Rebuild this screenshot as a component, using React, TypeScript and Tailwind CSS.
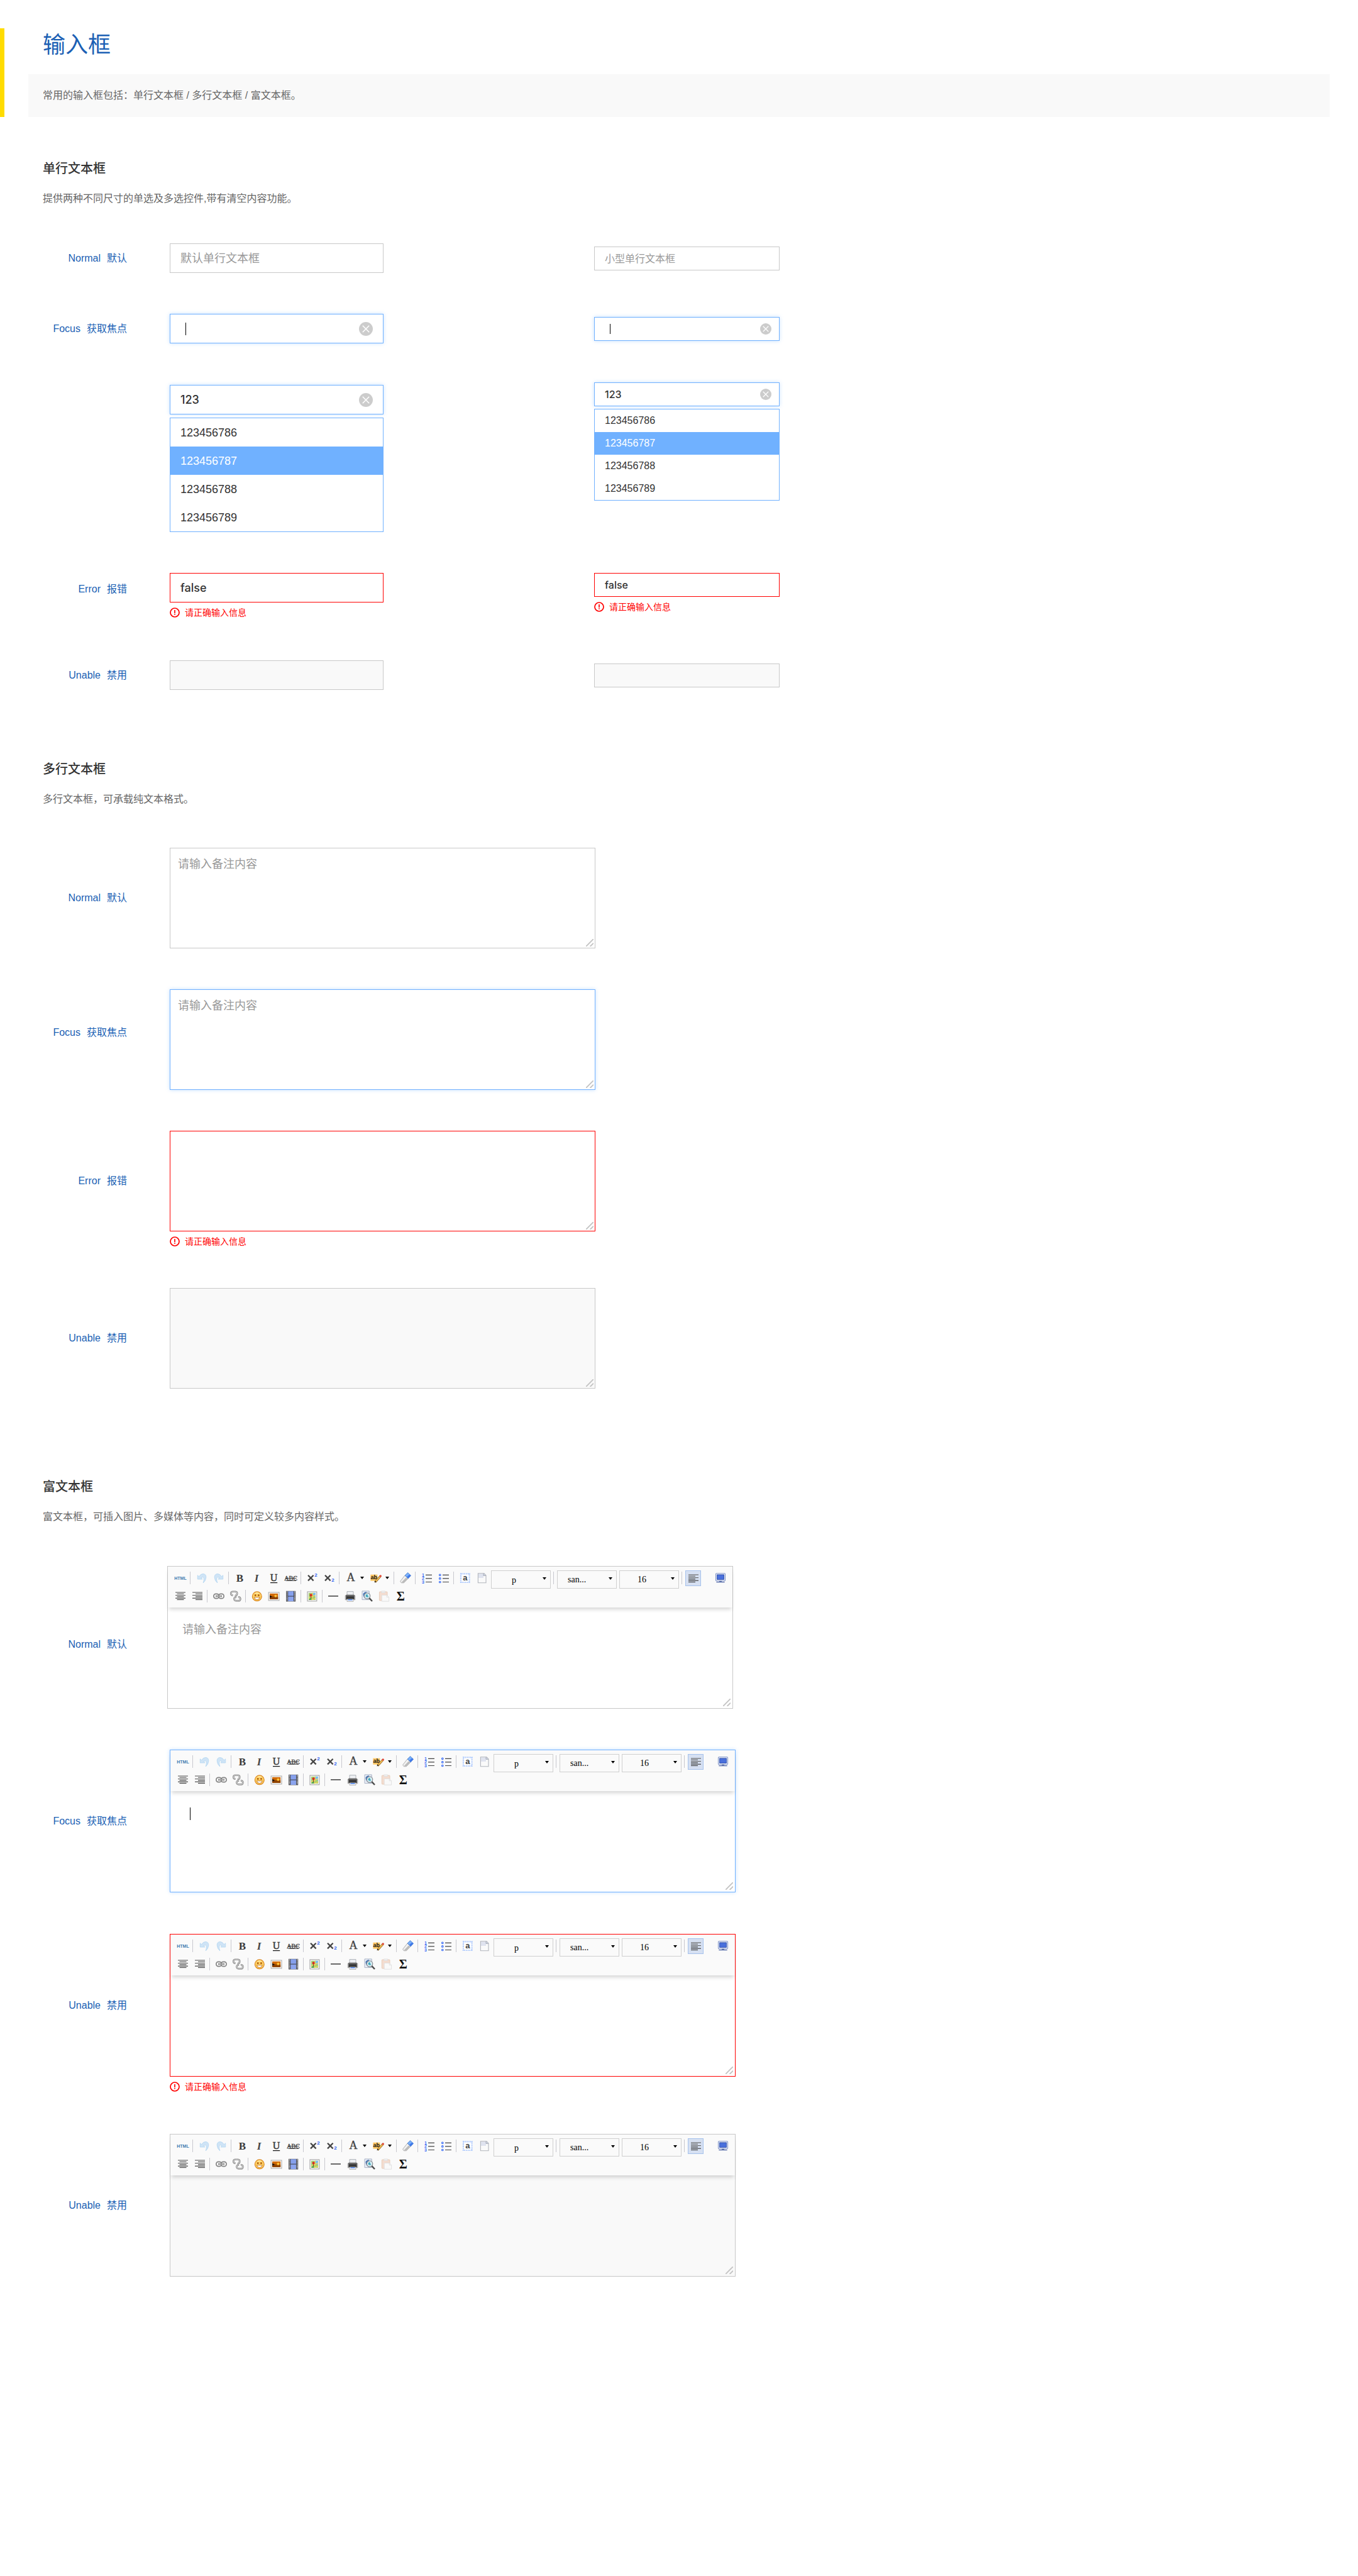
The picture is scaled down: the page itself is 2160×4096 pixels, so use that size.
import React, { useId } from "react";

type State = "normal" | "focus" | "error" | "disabled";

const frame: Record<State, string> = {
  normal: "border-[#c8c8c8] bg-white",
  focus: "border-[#70b1ff] bg-white shadow-[0_0_6px_rgba(112,177,255,0.4)]",
  error: "border-[#ff0000] bg-white",
  disabled: "border-[#c8c8c8] bg-[#f9f9f9]",
};

/* ---------- shared pieces ---------- */

function Row({
  label,
  htmlFor,
  labelClass,
  gapClass = "gap-[68px]",
  className,
  children,
}: {
  label?: [string, string];
  htmlFor?: string;
  labelClass: string;
  gapClass?: string;
  className: string;
  children: React.ReactNode;
}) {
  return (
    <div className={`flex items-start ${gapClass} ${className}`}>
      <div className={`flex w-[134px] shrink-0 items-center justify-end ${labelClass}`}>
        {label && (
          <label htmlFor={htmlFor} className="flex gap-2.5 text-base leading-6 text-[#1b5fb4]">
            <span>{label[0]}</span>
            <span>{label[1]}</span>
          </label>
        )}
      </div>
      {children}
    </div>
  );
}

function SectionHead({ title, text, className }: { title: string; text: string; className: string }) {
  return (
    <div className={className}>
      <h2 className="text-xl leading-7 font-medium text-[#333]">{title}</h2>
      <p className="mt-[22px] text-base leading-6 text-[#666]">{text}</p>
    </div>
  );
}

function ErrorNote() {
  return (
    <p className="mt-2 flex h-4 items-center gap-2 text-sm text-[#ff0000]">
      <svg className="size-4" viewBox="0 0 16 16" fill="none" aria-hidden="true">
        <circle cx="8" cy="8" r="7" stroke="currentColor" strokeWidth="1.7" />
        <path d="M8 4.6V8.4" stroke="currentColor" strokeWidth="1.7" strokeLinecap="round" />
        <circle cx="8" cy="11" r="0.9" fill="currentColor" />
      </svg>
      请正确输入信息
    </p>
  );
}

function ResizeGrip() {
  return (
    <svg className="pointer-events-none absolute right-[3px] bottom-[3px] size-3" viewBox="0 0 12 12" aria-hidden="true">
      <path d="M0 12L12 0M6.6 12L12 6.6" stroke="#c4c4c4" strokeWidth="1.9" />
    </svg>
  );
}

function ClearIcon({ className }: { className: string }) {
  return (
    <svg className={className} viewBox="0 0 22 22" aria-hidden="true">
      <circle cx="11" cy="11" r="11" fill="#ccc" />
      <path d="M5.8 5.8L16.2 16.2M16.2 5.8L5.8 16.2" stroke="#fff" strokeWidth="1.5" />
    </svg>
  );
}

/* ---------- single line ---------- */

function TextBox({
  id,
  name,
  small,
  state,
  value,
  placeholder,
  clearable,
  caret,
}: {
  id?: string;
  name: string;
  small?: boolean;
  state: State;
  value?: string;
  placeholder?: string;
  clearable?: boolean;
  caret?: boolean;
}) {
  return (
    <div className="relative">
      <input
        id={id}
        aria-label={id ? undefined : name}
        type="text"
        defaultValue={value}
        placeholder={placeholder}
        disabled={state === "disabled"}
        aria-invalid={state === "error"}
        className={`block w-full border px-4 font-[Inter,'Noto_Sans_CJK_SC',sans-serif] font-medium text-[#333] outline-none placeholder:font-normal placeholder:text-[#999] placeholder:opacity-100 ${
          small ? "h-[38px] text-base" : "h-[47px] text-lg"
        } ${frame[state]}`}
      />
      {caret && (
        <span
          className={`pointer-events-none absolute w-px bg-black ${
            small ? "top-[11px] left-[25px] h-4" : "top-[14px] left-[25px] h-5"
          }`}
        />
      )}
      {clearable && (
        <button
          type="button"
          aria-label="清空"
          className={`absolute inset-y-0 flex items-center ${small ? "right-[13px]" : "right-[17px]"}`}
        >
          <ClearIcon className={small ? "size-[18px]" : "size-[22px]"} />
        </button>
      )}
    </div>
  );
}

function Options({ small }: { small?: boolean }) {
  const items = ["123456786", "123456787", "123456788", "123456789"];
  return (
    <ul
      role="listbox"
      aria-label="候选内容"
      className={`border border-[#70b1ff] bg-white ${small ? "mt-1 text-base" : "mt-[5px] text-lg"}`}
    >
      {items.map((t, i) => (
        <li
          key={t}
          role="option"
          aria-selected={i === 1}
          className={`flex items-center px-4 ${small ? "h-9" : "h-[45px]"} ${
            i === 1 ? "bg-[#70b1ff] text-white" : "text-[#333]"
          }`}
        >
          {t}
        </li>
      ))}
    </ul>
  );
}

function Pair({ align, large, small }: { align: string; large: React.ReactNode; small: React.ReactNode }) {
  return (
    <div className={`flex gap-[335px] ${align}`}>
      <div className="w-[340px]">{large}</div>
      <div className="w-[295px]">{small}</div>
    </div>
  );
}

/* ---------- multi line ---------- */

function TextArea({ id, state, placeholder }: { id: string; state: State; placeholder?: string }) {
  return (
    <div className="w-[677px]">
      <div className="relative">
        <textarea
          id={id}
          placeholder={placeholder}
          disabled={state === "disabled"}
          aria-invalid={state === "error"}
          className={`block h-40 w-full resize-none border px-3 py-3 text-lg leading-[26px] text-[#333] outline-none placeholder:text-[#999] placeholder:opacity-100 ${frame[state]}`}
        />
        <ResizeGrip />
      </div>
      {state === "error" && <ErrorNote />}
    </div>
  );
}

/* ---------- rich text toolbar ---------- */

function Glyph({ children }: { children: React.ReactNode }) {
  return (
    <svg className="size-[18px] overflow-visible" viewBox="0 0 18 18" fill="none" aria-hidden="true">
      {children}
    </svg>
  );
}

const serif = "'Liberation Serif', serif";
const sans = "'Liberation Sans', sans-serif";

const lineYs = [3, 5.3, 7.6, 9.9, 12.2, 14.5];

function Lines({ align }: { align: "left" | "center" | "right" }) {
  return (
    <>
      {lineYs.map((y, i) => {
        const w = i % 2 === 0 ? 16 : 11;
        const x = align === "left" ? 1 : align === "right" ? 17 - w : 9 - w / 2;
        return <rect key={y} x={x} y={y - 0.6} width={w} height="1.2" fill={i < 3 ? "#6a6a6a" : "#484848"} />;
      })}
    </>
  );
}

const icons: Record<string, React.ReactNode> = {
  HTML: (
    <text x="9" y="11.6" textAnchor="middle" fontFamily={sans} fontWeight="700" fontSize="7" fill="#3f7ab0">
      HTML
    </text>
  ),
  撤销: (
    <path
      d="M2.3 4.8L4.6 6.8Q7.2 2.4 11 2.5Q16 2.9 15.8 8Q15.4 13.6 11.2 17Q12.8 12.6 12.2 9.4Q11 6.6 8 8.6L10 11H2.3Z"
      fill="#cfe4f6"
      stroke="#b3d5f1"
      strokeWidth="0.8"
    />
  ),
  重做: (
    <path
      d="M15.7 4.8L13.4 6.8Q10.8 2.4 7 2.5Q2 2.9 2.2 8Q2.6 13.6 6.8 17Q5.2 12.6 5.8 9.4Q7 6.6 10 8.6L8 11H15.7Z"
      fill="#cfe4f6"
      stroke="#b3d5f1"
      strokeWidth="0.8"
    />
  ),
  加粗: (
    <text x="8.4" y="14.6" textAnchor="middle" fontFamily={serif} fontWeight="700" fontSize="17" fill="#3a3a3a">
      B
    </text>
  ),
  斜体: (
    <text x="8" y="14.6" textAnchor="middle" fontFamily={serif} fontWeight="700" fontStyle="italic" fontSize="17" fill="#444">
      I
    </text>
  ),
  下划线: (
    <>
      <text x="8.6" y="14.2" textAnchor="middle" fontFamily={serif} fontSize="16" fill="#3a3a3a" stroke="#3a3a3a" strokeWidth="0.5">
        U
      </text>
      <rect x="3" y="16" width="11.2" height="1.2" fill="#111" />
    </>
  ),
  删除线: (
    <>
      <text x="8.6" y="12.6" textAnchor="middle" fontFamily={serif} fontSize="10" fill="#444" stroke="#444" strokeWidth="0.3">
        ABC
      </text>
      <path d="M0 9.4H17.6M0.6 13.2H17" stroke="#333" strokeWidth="1" />
    </>
  ),
  上标: (
    <>
      <path d="M2 4.7L10.6 13.4M10.6 4.7L2 13.4" stroke="#444" strokeWidth="2.3" />
      <text x="12.2" y="7" fontFamily={sans} fontWeight="700" fontSize="8" fill="#2f63f0">
        2
      </text>
    </>
  ),
  下标: (
    <>
      <path d="M2 4.7L10.6 13.4M10.6 4.7L2 13.4" stroke="#444" strokeWidth="2.3" />
      <text x="12.2" y="15" fontFamily={sans} fontWeight="700" fontSize="8" fill="#2f63f0">
        2
      </text>
    </>
  ),
  字体颜色: (
    <text x="9" y="14" textAnchor="middle" fontFamily={serif} fontSize="18" fill="#444" stroke="#444" strokeWidth="0.4">
      A
    </text>
  ),
  背景色: (
    <>
      <rect x="0.4" y="3.7" width="11" height="10" fill="#ffc966" />
      <text x="0.4" y="11.4" fontFamily={sans} fontWeight="700" fontSize="9" fill="#111">
        ab
      </text>
      <path d="M7.6 15.6L16 6.4" stroke="#8a5a12" strokeWidth="3.2" />
      <path d="M8.4 14.6L15.6 6.8" stroke="#f7c55a" strokeWidth="1.8" />
      <circle cx="16.2" cy="6" r="1.8" fill="#e04a3c" />
      <path d="M6.4 16.4L7.6 13.6L9.4 15Z" fill="#222" />
    </>
  ),
  清除格式: (
    <>
      <path d="M0.6 14.4L8 5L13.2 9.8L6.4 16.8H2.4Z" fill="#f2f2f2" stroke="#9d9d9d" strokeWidth="0.8" />
      <path d="M2.2 16.6L9.8 8.4L13 10.6L6.4 16.8Z" fill="#bcbcbc" />
      <path d="M8 5L12.6 0.6L17.6 5.2L13.2 10Z" fill="#79b0fb" stroke="#4f7fc8" strokeWidth="0.8" />
      <path d="M11 7.6L15.4 3.4L17.4 5.4L13.2 9.8Z" fill="#3f78e8" />
    </>
  ),
  有序列表: (
    <>
      {[1, 2, 3].map((n) => (
        <text key={n} x="1" y={1.2 + n * 5.6} fontFamily={sans} fontWeight="700" fontSize="7" fill="#3a6cf4">
          {n}
        </text>
      ))}
      <path d="M7 4.3H17M7 9.9H17M7 15.5H17" stroke="#444" strokeWidth="1.2" />
    </>
  ),
  无序列表: (
    <>
      {[4.3, 9.9, 15.5].map((y) => (
        <circle key={y} cx="2.8" cy={y} r="1.3" fill="#dbe6ff" stroke="#3a6cf4" strokeWidth="1.1" />
      ))}
      <path d="M7 4.3H17M7 9.9H17M7 15.5H17" stroke="#444" strokeWidth="1.2" />
    </>
  ),
  全选: (
    <>
      <rect x="2" y="2.4" width="13.6" height="13.6" fill="#fff" stroke="#a9c6fd" strokeWidth="2.2" strokeDasharray="1.6 1.1" />
      <text x="8.8" y="13" textAnchor="middle" fontFamily={sans} fontWeight="700" fontSize="13" fill="#444">
        a
      </text>
    </>
  ),
  清空文档: (
    <>
      <path d="M2.4 1.9H12L15 5V16.7H2.4Z" fill="#fafafa" stroke="#b3b6bd" strokeWidth="1.1" />
      <path d="M3 2.5H11V9H3Z" fill="#dfe3ef" />
      <path d="M11 1.9V5.4H15" fill="#cfd5e4" stroke="#a3a8b6" strokeWidth="0.9" />
    </>
  ),
  居左: <Lines align="left" />,
  居中: <Lines align="center" />,
  居右: <Lines align="right" />,
  全屏: (
    <>
      <rect x="1.5" y="1.7" width="15" height="12" rx="1.2" fill="#f4f6fd" stroke="#7f93c6" strokeWidth="1.1" />
      <rect x="3.6" y="3.9" width="10.8" height="7.6" fill="#4a70dc" stroke="#2a4ba6" strokeWidth="0.9" />
      <rect x="7" y="13.8" width="4" height="1.6" fill="#5f73a8" />
      <rect x="2.4" y="15" width="13.2" height="1.3" fill="#5b70ac" />
    </>
  ),
  超链接: (
    <>
      <rect x="0.9" y="5.4" width="8.4" height="7.2" rx="3.4" stroke="#858585" strokeWidth="1.7" />
      <rect x="8.7" y="5.4" width="8.4" height="7.2" rx="3.4" stroke="#858585" strokeWidth="1.7" />
      <path d="M4 9H14" stroke="#6f6f6f" strokeWidth="2.6" />
      <path d="M4.6 9H13.4" stroke="#e6e6e6" strokeWidth="0.9" />
    </>
  ),
  取消链接: (
    <>
      <path d="M4.6 7.6Q1 7.4 1.3 4.4Q1.6 1.8 4.6 1.8H8.4Q11.4 2 11.2 5Q10.8 8.4 7.6 8.2" stroke="#858585" strokeWidth="2.6" />
      <path d="M4.6 7.6Q1 7.4 1.3 4.4Q1.6 1.8 4.6 1.8H8.4Q11.4 2 11.2 5Q10.8 8.4 7.6 8.2" stroke="#ededed" strokeWidth="0.9" />
      <path d="M10.2 10.4Q6.2 10.4 6.4 13.4Q6.8 16.4 9.8 16.4H13.2Q16.6 16.2 16.4 13.2Q16 10.2 12.8 10.4" stroke="#858585" strokeWidth="2.6" />
      <path d="M10.2 10.4Q6.2 10.4 6.4 13.4Q6.8 16.4 9.8 16.4H13.2Q16.6 16.2 16.4 13.2Q16 10.2 12.8 10.4" stroke="#ededed" strokeWidth="0.9" />
    </>
  ),
  表情: (
    <>
      <circle cx="8.8" cy="9.3" r="7.4" fill="#fdcf62" stroke="#dc8a26" strokeWidth="1.2" />
      <path d="M4.4 5.2Q8.8 1.4 13.2 5.2Q8.8 4.4 4.4 5.2Z" fill="#fff0b4" />
      <circle cx="6.2" cy="7.6" r="1.3" fill="#a14c06" />
      <circle cx="11.4" cy="7.6" r="1.3" fill="#a14c06" />
      <path d="M4.4 10.8H13.2Q12.6 14.4 8.8 14.6Q5 14.4 4.4 10.8Z" fill="#fff" stroke="#b76413" strokeWidth="0.8" />
    </>
  ),
  图片: (
    <>
      <rect x="0.2" y="3" width="16.8" height="12.8" fill="#fff" stroke="#b4b4b4" strokeWidth="1.2" />
      <rect x="2" y="4.8" width="13.2" height="9.2" fill="#d06a05" />
      <path d="M2 10.6L4.6 8.6L7.2 9.6L15.2 10V14H2Z" fill="#8f4300" />
      <circle cx="11.4" cy="8.8" r="2" fill="#ffc53a" />
      <path d="M2 7.6L6 10L2 11.8Z" fill="#1f1206" />
    </>
  ),
  视频: (
    <>
      <rect x="1" y="0.8" width="15.2" height="16.6" fill="#3d3f46" />
      <path d="M2.5 1.6V17M14.7 1.6V17" stroke="#f4f4f4" strokeWidth="1.4" strokeDasharray="1.3 0.9" />
      <rect x="4.2" y="1.2" width="8.8" height="7.4" fill="#86a0ec" />
      <rect x="4.2" y="9.6" width="8.8" height="7.4" fill="#8ba4ee" />
    </>
  ),
  地图: (
    <>
      <rect x="1" y="2" width="14.8" height="14.8" fill="#fff" stroke="#a9a9a9" strokeWidth="1.2" />
      <rect x="2.8" y="3.8" width="11.2" height="11.2" fill="#a5cf72" />
      <path d="M9.4 3.8H14V10.4L9.4 7Z" fill="#79bdf0" />
      <path d="M2.8 12L14 7.4M7.4 15L14 12.4M9.4 3.8L8 15" stroke="#f2d65a" strokeWidth="1.2" />
      <path d="M2.8 15L7.4 10.6V15Z" fill="#4f9c4c" />
      <circle cx="6.6" cy="7.2" r="2" fill="#e02a20" />
      <path d="M6.6 8.6V12" stroke="#a11a14" strokeWidth="0.9" />
    </>
  ),
  分隔线: <path d="M0 8.9H16" stroke="#1d1d1d" strokeWidth="1.3" />,
  打印: (
    <>
      <path d="M3 1.6H13V8H3Z" fill="#eef0f3" stroke="#a8acb2" strokeWidth="0.9" />
      <path d="M0.2 8H2V14.8H0.2ZM14 8H15.8V14.8H14Z" fill="#d9d9d9" stroke="#8d8d8d" strokeWidth="0.7" />
      <rect x="1.4" y="6.8" width="13.2" height="7.4" rx="0.8" fill="#383838" />
      <rect x="1.8" y="7.2" width="12.4" height="2" fill="#6d6d6d" />
      <path d="M3 13.8H13V17.4H3Z" fill="#fff" stroke="#9a9a9a" strokeWidth="0.8" />
      <rect x="4.4" y="14" width="7.2" height="1.6" fill="#4c84ec" />
    </>
  ),
  预览: (
    <>
      <path d="M0 0.9H11.2V14.6H0Z" fill="#e9edf6" stroke="#a9b3c6" strokeWidth="1" />
      <path d="M1.6 5Q4.2 1.6 7.2 2.4L4.2 12Q1.2 9 1.6 5Z" fill="#3f6fb4" />
      <circle cx="8" cy="8.6" r="4.7" fill="#d8eef4" stroke="#8e9398" strokeWidth="1.3" />
      <path d="M5.6 9.6Q5.2 6.6 8.2 5.8Q8.6 8.4 10.2 9.4Q8.6 12 5.6 9.6Z" fill="#3fa7bc" />
      <path d="M11.4 12.2L16 17" stroke="#4c4c4c" strokeWidth="2.4" />
    </>
  ),
  粘贴: (
    <>
      <rect x="0.4" y="2" width="12.6" height="14" rx="0.8" fill="#f4ddd0" stroke="#e6c8b6" strokeWidth="0.9" />
      <rect x="3.8" y="0.9" width="5.8" height="2.8" fill="#eeeeee" stroke="#d9d9d9" strokeWidth="0.6" />
      <path d="M4.2 7.4H12.4L15.6 10.4V17.2H4.2Z" fill="#f9f9f9" stroke="#e0e0e0" strokeWidth="0.9" />
      <path d="M12.2 7.6V10.6H15.4" stroke="#dcdcdc" strokeWidth="0.8" />
    </>
  ),
  特殊字符: (
    <text x="7.2" y="15.8" textAnchor="middle" fontFamily={serif} fontWeight="700" fontSize="20" fill="#111">
      Σ
    </text>
  ),
};

function Tool({ name, disabled }: { name: string; disabled?: boolean }) {
  return (
    <button type="button" aria-label={name} disabled={disabled} className="flex h-6 w-[27px] shrink-0 items-center justify-center">
      <Glyph>{icons[name]}</Glyph>
    </button>
  );
}

function Sep({ wide }: { wide?: boolean }) {
  return <span className={`mt-0.5 h-5 w-px shrink-0 bg-[#c8c8ce] ${wide ? "mr-[5px] ml-1" : "mr-1 ml-0.5"}`} />;
}

function Triangle() {
  return (
    <svg className="h-1 w-1.5" viewBox="0 0 6 4" aria-hidden="true">
      <path d="M0 0H6L3 4Z" fill="#000" />
    </svg>
  );
}

function DropArrow({ name }: { name: string }) {
  return (
    <button type="button" aria-label={name} className="flex h-6 w-[13px] shrink-0 items-center pl-0.5">
      <Triangle />
    </button>
  );
}

function Picker({ name, value, pad, className }: { name: string; value: string; pad: string; className?: string }) {
  return (
    <span className={`relative shrink-0 ${className ?? ""}`}>
      <select
        aria-label={name}
        defaultValue={value}
        className={`block h-[29px] w-[95px] appearance-none border border-[#cfcfcf] bg-[#fafafa] font-['Liberation_Serif',serif] text-sm text-black outline-none ${pad}`}
      >
        <option>{value}</option>
      </select>
      <span className="pointer-events-none absolute top-[11px] right-[7px]">
        <Triangle />
      </span>
    </span>
  );
}

function Toolbar() {
  return (
    <div
      role="toolbar"
      aria-label="编辑工具"
      className="relative z-10 bg-[#fafafa] pt-1.5 pb-1.5 pl-1.5 shadow-[0_5px_6px_-2px_rgba(0,0,0,0.17)]"
    >
      <div className="flex h-[29px] items-start">
        <Tool name="HTML" />
        <Sep />
        <Tool name="撤销" disabled />
        <Tool name="重做" disabled />
        <Sep />
        <Tool name="加粗" />
        <Tool name="斜体" />
        <Tool name="下划线" />
        <Tool name="删除线" />
        <Sep />
        <Tool name="上标" />
        <Tool name="下标" />
        <Sep />
        <Tool name="字体颜色" />
        <DropArrow name="选择字体颜色" />
        <Tool name="背景色" />
        <DropArrow name="选择背景色" />
        <Sep />
        <Tool name="清除格式" />
        <Sep />
        <Tool name="有序列表" />
        <Tool name="无序列表" />
        <Sep />
        <Tool name="全选" />
        <Tool name="清空文档" />
        <Picker name="段落" value="p" pad="pl-8 pt-0.5" className="ml-px" />
        <Sep wide />
        <Picker name="字体" value="san..." pad="pl-4" />
        <Picker name="字号" value="16" pad="pl-7" className="ml-1" />
        <Sep wide />
        <button
          type="button"
          aria-label="居左"
          aria-pressed="true"
          className="flex size-[25px] shrink-0 items-center justify-center border border-[#a6c2ec] bg-[#d6e0f2]"
        >
          <Glyph>{icons["居左"]}</Glyph>
        </button>
        <span className="ml-[17px]">
          <Tool name="全屏" />
        </span>
      </div>
      <div className="flex h-6 items-start">
        <Tool name="居中" />
        <Tool name="居右" />
        <Sep />
        <Tool name="超链接" />
        <Tool name="取消链接" />
        <Sep />
        <Tool name="表情" />
        <Tool name="图片" />
        <Tool name="视频" />
        <Sep />
        <Tool name="地图" />
        <Sep />
        <Tool name="分隔线" />
        <Tool name="打印" />
        <Tool name="预览" />
        <Tool name="粘贴" disabled />
        <Tool name="特殊字符" />
      </div>
    </div>
  );
}

function RichText({ id, state, placeholder, caret }: { id: string; state: State; placeholder?: string; caret?: boolean }) {
  return (
    <div className="w-[900px]">
      <div className={`relative border ${frame[state]}`}>
        <Toolbar />
        <div className="relative">
          <textarea
            id={id}
            placeholder={placeholder}
            disabled={state === "disabled"}
            aria-invalid={state === "error"}
            className="block h-40 w-full resize-none bg-transparent px-[23px] py-[22px] text-lg leading-[26px] text-[#333] outline-none placeholder:text-[#999] placeholder:opacity-100"
          />
          {caret && <span className="pointer-events-none absolute top-[26px] left-[31px] h-5 w-px bg-black" />}
        </div>
        <ResizeGrip />
      </div>
      {state === "error" && <ErrorNote />}
    </div>
  );
}

/* ---------- page ---------- */

export default function App() {
  const uid = useId();
  const id = (n: string) => `${uid}-${n}`;
  return (
    <div className="min-h-screen bg-white pt-[45px] pb-20 font-['Liberation_Sans','Noto_Sans_CJK_SC',sans-serif]">
      <header className="flex border-l-[7px] border-[#ffdc00] pr-[45px] pl-[38px]">
        <div className="flex-1">
          <h1 className="h-[73px] pl-[23px] text-4xl leading-[54px] font-normal text-[#1b5fb4]">输入框</h1>
          <p className="flex h-[68px] items-center bg-[#f9f9f9] pl-[23px] text-base text-[#666]">
            常用的输入框包括：单行文本框 / 多行文本框 / 富文本框。
          </p>
        </div>
      </header>

      <main className="px-[68px]">
        <section>
          <SectionHead
            className="mt-[68px]"
            title="单行文本框"
            text="提供两种不同尺寸的单选及多选控件,带有清空内容功能。"
          />
          <Row label={["Normal", "默认"]} htmlFor={id("s1")} labelClass="h-[47px]" className="mt-[59px]">
            <Pair
              align="items-center"
              large={<TextBox id={id("s1")} name="默认单行文本框" state="normal" placeholder="默认单行文本框" />}
              small={<TextBox name="小型单行文本框" small state="normal" placeholder="小型单行文本框" />}
            />
          </Row>
          <Row label={["Focus", "获取焦点"]} htmlFor={id("s2")} labelClass="h-[47px]" className="mt-[65px]">
            <Pair
              align="items-center"
              large={<TextBox id={id("s2")} name="获取焦点" state="focus" caret clearable />}
              small={<TextBox name="小型获取焦点" small state="focus" caret clearable />}
            />
          </Row>
          <Row labelClass="h-[47px]" className="mt-[62px]">
            <Pair
              align="items-start"
              large={
                <div className="pt-1">
                  <TextBox name="联想输入" state="focus" value="123" clearable />
                  <Options />
                </div>
              }
              small={
                <>
                  <TextBox name="小型联想输入" small state="focus" value="123" clearable />
                  <Options small />
                </>
              }
            />
          </Row>
          <Row label={["Error", "报错"]} htmlFor={id("s4")} labelClass="h-[51px]" className="mt-[65px]">
            <Pair
              align="items-start"
              large={
                <>
                  <TextBox id={id("s4")} name="报错" state="error" value="false" />
                  <ErrorNote />
                </>
              }
              small={
                <>
                  <TextBox name="小型报错" small state="error" value="false" />
                  <ErrorNote />
                </>
              }
            />
          </Row>
          <Row label={["Unable", "禁用"]} htmlFor={id("s5")} labelClass="h-[47px]" className="mt-[68px]">
            <Pair
              align="items-center"
              large={<TextBox id={id("s5")} name="禁用" state="disabled" />}
              small={<TextBox name="小型禁用" small state="disabled" />}
            />
          </Row>
        </section>

        <section>
          <SectionHead className="mt-[112px]" title="多行文本框" text="多行文本框，可承载纯文本格式。" />
          <Row label={["Normal", "默认"]} htmlFor={id("m1")} labelClass="h-40" className="mt-[65px]">
            <TextArea id={id("m1")} state="normal" placeholder="请输入备注内容" />
          </Row>
          <Row label={["Focus", "获取焦点"]} htmlFor={id("m2")} labelClass="h-[138px]" className="mt-[65px]">
            <TextArea id={id("m2")} state="focus" placeholder="请输入备注内容" />
          </Row>
          <Row label={["Error", "报错"]} htmlFor={id("m3")} labelClass="h-40" className="mt-[65px]">
            <TextArea id={id("m3")} state="error" />
          </Row>
          <Row label={["Unable", "禁用"]} htmlFor={id("m4")} labelClass="h-40" className="mt-[66px]">
            <TextArea id={id("m4")} state="disabled" />
          </Row>
        </section>

        <section>
          <SectionHead
            className="mt-[142px]"
            title="富文本框"
            text="富文本框，可插入图片、多媒体等内容，同时可定义较多内容样式。"
          />
          <Row label={["Normal", "默认"]} htmlFor={id("r1")} labelClass="h-[250px]" gapClass="gap-16" className="mt-[66px]">
            <RichText id={id("r1")} state="normal" placeholder="请输入备注内容" />
          </Row>
          <Row label={["Focus", "获取焦点"]} htmlFor={id("r2")} labelClass="h-[227px]" className="mt-[42px]">
            <RichText id={id("r2")} state="focus" caret />
          </Row>
          <Row label={["Unable", "禁用"]} htmlFor={id("r3")} labelClass="h-[227px]" className="mt-[66px]">
            <RichText id={id("r3")} state="error" />
          </Row>
          <Row label={["Unable", "禁用"]} htmlFor={id("r4")} labelClass="h-[227px]" className="mt-[67px]">
            <RichText id={id("r4")} state="disabled" />
          </Row>
        </section>
      </main>
    </div>
  );
}
